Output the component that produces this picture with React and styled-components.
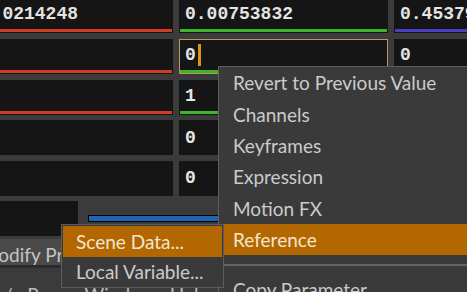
import React from "react";
import styled, { createGlobalStyle } from "styled-components";

const GlobalStyle = createGlobalStyle`
  html, body { margin: 0; padding: 0; background: #3b3b3b; }
  body { overflow: hidden; }
`;

const Page = styled.div`
  position: relative;
  width: 467px;
  height: 292px;
  overflow: hidden;
  background: #3b3b3b;
`;

const ParmGrid = styled.div`
  display: grid;
  grid-template-columns: 209px 209px 209px;
  grid-auto-rows: 35px;
  column-gap: 6px;
  row-gap: 5.67px;
  margin-left: -36px;
  margin-top: -1.67px;
  width: max-content;
`;

const Cell = styled.div`
  display: flex;
  flex-direction: column;
  background: #151515;
  box-sizing: border-box;
  border: 1px solid ${(p) => (p.$focused ? "#c39459" : "transparent")};
`;

const Value = styled.div`
  flex: 1;
  display: flex;
  align-items: center;
  padding-left: 5px;
  font-family: "Liberation Mono", "DejaVu Sans Mono", monospace;
  font-size: 18px;
  font-weight: 700;
  color: #e4e4e4;
  white-space: nowrap;
  overflow: hidden;
`;

const Bar = styled.div`
  height: 3px;
  flex: none;
  background: ${(p) => p.$color};
`;

const Caret = styled.span`
  display: inline-block;
  width: 3px;
  height: 22px;
  margin-left: 2px;
  background: #d8951c;
`;

const SliderRow = styled.div`
  display: flex;
  align-items: center;
  gap: 10px;
  height: 35px;
  margin-top: 5.5px;
  margin-left: -36px;
`;

const FieldBox = styled.div`
  width: 114px;
  height: 35px;
  background: #151515;
`;

const Track = styled.div`
  width: 300px;
  height: 5px;
  background: #1f63b3;
  border: 1px solid #000;
  border-right: none;
`;

const TabStrip = styled.div`
  display: flex;
  height: 26px;
  margin-top: 3px;
  background: #2c2c2c;
  border-bottom: 3px solid #2c2c2c;
`;

const Tab = styled.div`
  display: flex;
  align-items: flex-start;
  margin-left: -31px;
  padding: 5px 12px 0;
  background: #4a4a4a;
  font-family: Lato, "Open Sans", sans-serif;
  font-size: 19px;
  line-height: 22px;
  color: #c4c4c4;
  white-space: nowrap;
`;

const StatusLine = styled.div`
  margin-top: 16px;
  padding-left: 4px;
  font-family: Lato, "Open Sans", sans-serif;
  font-size: 19px;
  line-height: 22px;
  color: #bdbdbd;
  white-space: pre;
`;

const Menu = styled.div`
  position: absolute;
  left: ${(p) => p.$left}px;
  top: ${(p) => p.$top}px;
  width: ${(p) => p.$width}px;
  box-sizing: border-box;
  background: #3a3a3a;
  border: 1px solid #5d5d5d;
  padding: ${(p) => p.$pad || 0}px;
  font-family: Lato, "Open Sans", sans-serif;
  font-size: 19px;
  z-index: ${(p) => p.$z || 1};
`;

const Item = styled.div`
  height: ${(p) => p.$h || 31.4}px;
  display: flex;
  align-items: center;
  padding-left: ${(p) => p.$indent}px;
  background: ${(p) => (p.$active ? "#b26700" : "transparent")};
  color: ${(p) => (p.$active ? "#f4e5cf" : "#cbcbcb")};
  white-space: nowrap;
`;

const Separator = styled.div`
  height: 2px;
  margin: 9px 0 7px;
  background: #636363;
`;

const cols = [
  ["-0.0214248", "0.00753832", "0.453798"],
  ["", "0", "0"],
  ["", "1", "0"],
  ["", "0", "0"],
  ["", "0", "0"],
];
const barColors = ["#cf3d27", "#3cb72a", "#4a3fc4"];

export default function App() {
  return (
    <Page>
      <GlobalStyle />
      <ParmGrid>
        {cols.map((row, r) =>
          row.map((v, c) => {
            const focused = r === 1 && c === 1;
            return (
              <Cell key={`${r}-${c}`} $focused={focused}>
                <Value>
                  {v}
                  {focused && <Caret />}
                </Value>
                {r < 3 && <Bar $color={barColors[c]} />}
              </Cell>
            );
          })
        )}
      </ParmGrid>
      <SliderRow>
        <FieldBox />
        <Track />
      </SliderRow>
      <TabStrip>
        <Tab>Modify Pre-Transform</Tab>
      </TabStrip>
      <StatusLine>{"/   Parm   Window   Help"}</StatusLine>

      <Menu $left={218} $top={66} $width={300}>
        <Item $indent={14}>Revert to Previous Value</Item>
        <Item $indent={14}>Channels</Item>
        <Item $indent={14}>Keyframes</Item>
        <Item $indent={14}>Expression</Item>
        <Item $indent={14}>Motion FX</Item>
        <Item $indent={14} $active>Reference</Item>
        <Separator />
        <Item $indent={14}>Copy Parameter</Item>
      </Menu>

      <Menu $left={61} $top={224} $width={163} $pad={1} $z={2}>
        <Item $indent={13} $h={31} $active>Scene Data...</Item>
        <Item $indent={13} $h={29}>Local Variable...</Item>
      </Menu>
    </Page>
  );
}
